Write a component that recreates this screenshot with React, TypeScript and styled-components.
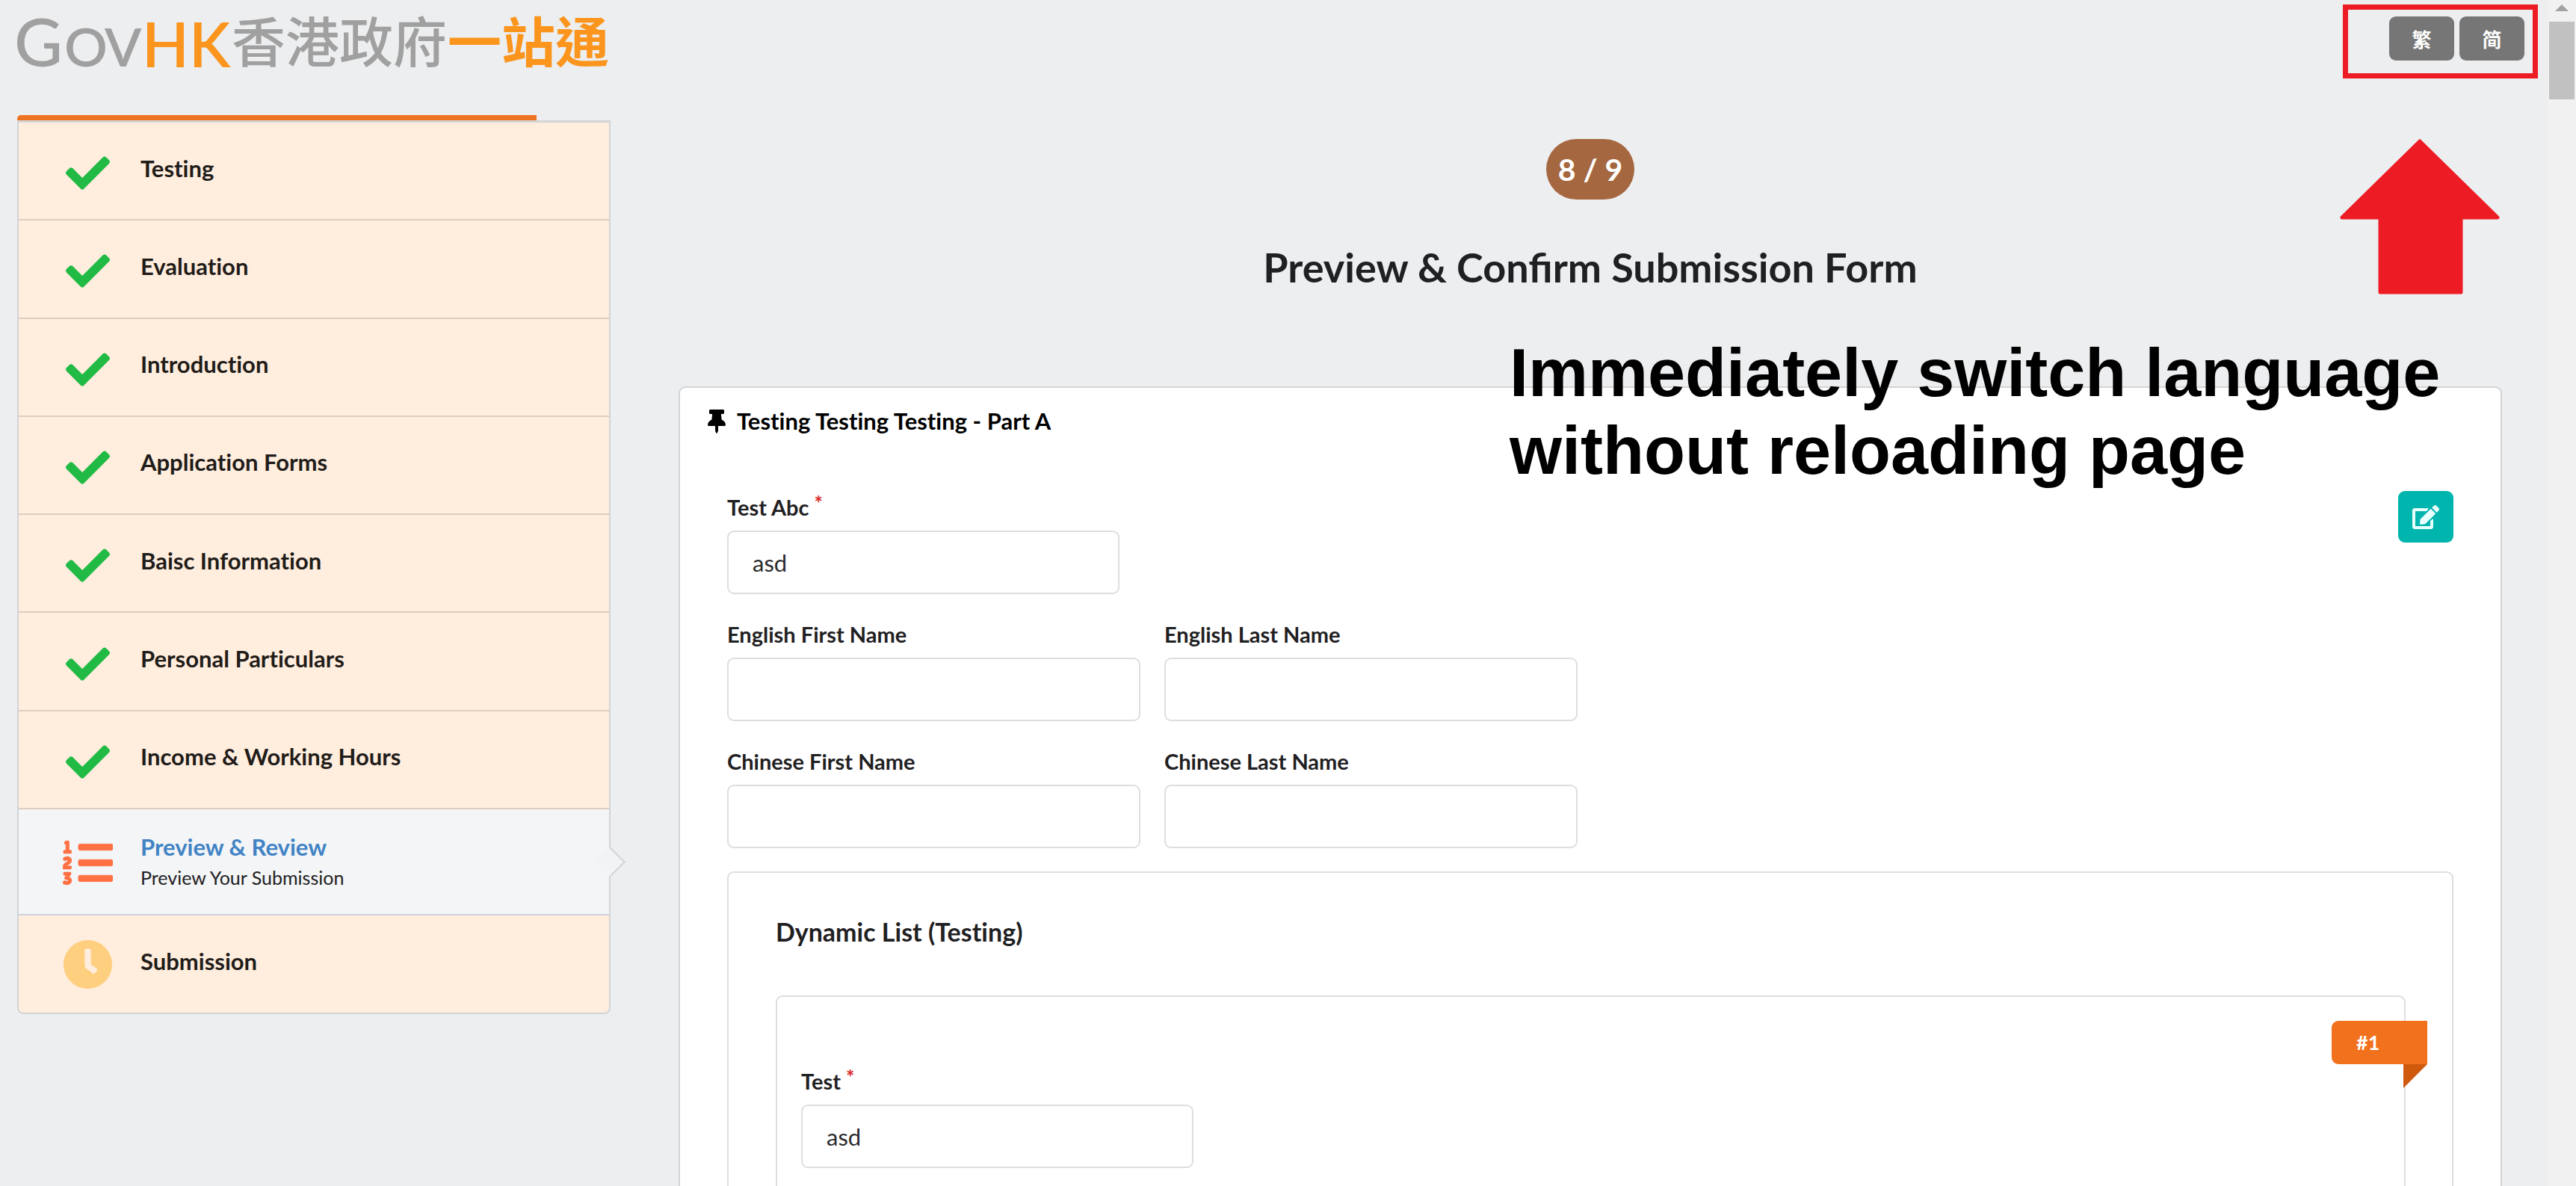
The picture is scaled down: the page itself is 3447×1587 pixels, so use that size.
import React from "react";
import styled, { createGlobalStyle, css } from "styled-components";
import { FaCheck, FaClock, FaEdit, FaListOl, FaThumbtack } from "react-icons/fa";

const lato = `Lato, "Noto Sans CJK TC", sans-serif`;
const cjk = `"Noto Sans CJK TC", sans-serif`;

const GlobalStyle = createGlobalStyle`
  *, *::before, *::after { box-sizing: border-box; }
  body { margin: 0; background: #eceef0; color: #1f2022; font-family: ${lato}; }
  h1, h2, h3, p, ol { margin: 0; padding: 0; }
`;

const Window = styled.div`
  display: flex;
  height: 100vh;
  overflow: hidden;
`;

const Page = styled.div`
  position: relative;
  flex: 1;
  min-width: 0;
`;

const Header = styled.header`
  display: flex;
  justify-content: space-between;
  align-items: flex-start;
  height: 154px;
  padding: 0 31px 0 19px;
`;

const Logo = styled.svg`
  display: block;
  width: 800px;
  height: 120px;
`;

const Languages = styled.nav`
  display: flex;
  gap: 7px;
  padding-top: 22px;
`;

const LanguageButton = styled.button`
  width: 87px;
  height: 59px;
  padding: 0;
  border: 0;
  border-radius: 9px;
  background: #767676;
  color: #fff;
  font: 700 26px/32px ${cjk};
  cursor: pointer;
`;

const Columns = styled.div`
  display: grid;
  grid-template-columns: 794fr 2440fr;
  gap: 91px;
  align-items: start;
  padding: 0 61px 0 23px;
`;

const Progress = styled.div`
  height: 7px;
`;

const ProgressBar = styled.div`
  height: 100%;
  border-top-left-radius: 5px;
  background: #ee7422;
`;

const Steps = styled.ol`
  display: grid;
  grid-template-rows: repeat(7, 1fr) 142px 130px;
  min-height: 1196px;
  border: 2px solid #d2d4d6;
  border-top-width: 3px;
  border-radius: 0 0 8px 8px;
  background: #ffeddd;
  list-style: none;
`;

const Step = styled.li<{ $active?: boolean }>`
  position: relative;
  display: flex;
  align-items: center;
  gap: 37px;
  padding-left: 59px;
  border-bottom: 2px solid #decdc0;

  &:last-child { border-bottom: 0; }

  ${({ $active }) =>
    $active &&
    css`
      background: #f3f5f7;
      border-bottom-color: #d0d2da;

      &::after {
        content: "";
        position: absolute;
        top: 50%;
        right: -16px;
        width: 29px;
        height: 29px;
        margin-top: -14px;
        border: solid #d2d4d6;
        border-width: 2px 2px 0 0;
        background: #f1f3f5;
        transform: rotate(45deg);
      }
    `}
`;

const StepIcon = styled.span<{ $tone: string; $drop?: number }>`
  display: flex;
  justify-content: center;
  width: 67px;
  padding-top: ${({ $drop = 0 }) => $drop}px;
  color: ${({ $tone }) => $tone};
`;

const StepTitle = styled.h3<{ $active?: boolean }>`
  padding-bottom: 8px;
  color: ${({ $active }) => ($active ? "#4183c4" : "#1f1c19")};
  font-size: 31px;
  font-variant-ligatures: none;
  line-height: 36px;
`;

const StepNote = styled.p`
  padding-bottom: 2px;
  font-size: 25px;
  line-height: 30px;
`;

const Main = styled.main`
  display: flex;
  flex-direction: column;
  padding-top: 32px;
`;

const Counter = styled.p`
  align-self: center;
  padding: 16px;
  border-radius: 41px;
  background: #a5673f;
  color: #fff;
  font-size: 41px;
  font-weight: 700;
  line-height: 49px;
`;

const PageTitle = styled.h1`
  padding: 59px 0 127px;
  font-size: 54px;
  line-height: 64px;
  text-align: center;
`;

const Card = styled.section`
  padding: 26px 37px 100px;
  border: 2px solid #d2d4d6;
  border-radius: 9px;
  background: #fff;
`;

const CardTitle = styled.h2`
  display: flex;
  align-items: center;
  gap: 15px;
  color: #000;
  font-size: 31px;
  font-variant-ligatures: none;
  line-height: 37px;
`;

const Form = styled.form`
  padding: 75px 26px 0;
`;

const TopRow = styled.div`
  display: flex;
  justify-content: space-between;
  align-items: flex-end;
`;

const EditButton = styled.button`
  display: flex;
  align-items: center;
  justify-content: center;
  width: 74px;
  height: 69px;
  margin-bottom: 69px;
  padding: 0;
  border: 0;
  border-radius: 9px;
  background: #00b5ad;
  color: #e8fffd;
  cursor: pointer;
`;

const FieldRow = styled.div`
  display: flex;
  gap: 32px;
  padding-top: 36px;
`;

const FieldBox = styled.div<{ $width: number }>`
  display: flex;
  flex-direction: column;
  gap: 14px;
  width: ${({ $width }) => $width}px;
`;

const Label = styled.label`
  font-size: 29px;
  font-weight: 700;
  line-height: 35px;
`;

const Required = styled.sup`
  padding-left: 7px;
  color: #db2828;
  font-size: 27px;
  line-height: 0;
  vertical-align: 7px;
`;

const TextInput = styled.input`
  width: 100%;
  height: 85px;
  padding: 0 32px;
  border: 2px solid #dededf;
  border-radius: 9px;
  background: #fff;
  color: #2b2c2d;
  font: 400 31px/38px ${lato};
`;

const Segment = styled.div`
  margin-top: 31px;
  padding: 58px 62px 80px 63px;
  border: 2px solid #dededf;
  border-radius: 9px;
`;

const SegmentTitle = styled.h3`
  padding-bottom: 65px;
  font-size: 34px;
  font-variant-ligatures: none;
  line-height: 41px;
`;

const ListItem = styled.div`
  position: relative;
  padding: 95px 32px 80px;
  border: 2px solid #dededf;
  border-radius: 9px;
`;

const Ribbon = styled.span`
  position: absolute;
  top: 32px;
  right: -31px;
  width: 128px;
  padding: 13px 33px;
  border-radius: 9px 0 0 9px;
  background: #f2711c;
  color: #fff;
  font-size: 27px;
  font-weight: 700;
  line-height: 32px;
`;

const RibbonFold = styled.i`
  position: absolute;
  top: 100%;
  right: 0;
  width: 32px;
  height: 32px;
  background: #cf590c;
  clip-path: polygon(0 0, 100% 0, 0 100%);
`;

const Highlight = styled.div`
  position: absolute;
  top: 6px;
  right: 13px;
  width: 261px;
  height: 99px;
  border: 7px solid #ed1c24;
  pointer-events: none;
`;

const Arrow = styled.svg`
  position: absolute;
  top: 185px;
  right: 63px;
  width: 216px;
  height: 210px;
`;

const Caption = styled.p`
  position: absolute;
  top: 447px;
  right: 0;
  width: 1394px;
  padding-left: 5px;
  color: #000;
  font: 700 90px/104px "Liberation Sans", Arial, sans-serif;
  pointer-events: none;
`;

const ScrollTrack = styled.div`
  display: flex;
  flex-direction: column;
  align-items: center;
  gap: 14px;
  width: 38px;
  padding-top: 6px;
  background: #f1f1f1;
`;

const ScrollArrow = styled.i`
  width: 18px;
  height: 9px;
  background: #a3a3a3;
  clip-path: polygon(50% 0, 100% 100%, 0 100%);
`;

const ScrollThumb = styled.div`
  width: 34px;
  height: 104px;
  background: #c1c1c1;
`;

const doneSteps = [
  "Testing",
  "Evaluation",
  "Introduction",
  "Application Forms",
  "Baisc Information",
  "Personal Particulars",
  "Income & Working Hours",
];

interface FieldProps {
  id: string;
  label: string;
  value?: string;
  required?: boolean;
  width?: number;
}

function Field({ id, label, value = "", required, width = 553 }: FieldProps) {
  return (
    <FieldBox $width={width}>
      <Label htmlFor={id}>
        {label}
        {required && <Required>*</Required>}
      </Label>
      <TextInput id={id} type="text" defaultValue={value} />
    </FieldBox>
  );
}

function GovLogo() {
  return (
    <Logo viewBox="0 0 800 120" role="img" aria-label="GovHK 香港政府一站通">
      <g fill="#a0a0a0" fontFamily="Lato, sans-serif">
        <text x="0" y="89" fontSize="89" fontWeight="500">G</text>
        <text x="67" y="89" fontSize="72" fontWeight="600">O</text>
        <text x="121" y="89" fontSize="72" fontWeight="600">V</text>
      </g>
      <text x="171" y="90" fill="#fb951e" fontFamily="Lato, sans-serif" fontSize="82" fontWeight="600">
        HK
      </text>
      <g fontFamily='"Noto Sans CJK TC", sans-serif' fontSize="72">
        <text x="291" y="83" fill="#a0a0a0" fontWeight="500">香港政府</text>
        <text x="580" y="83" fill="#fb951e" fontWeight="700">一站通</text>
      </g>
    </Logo>
  );
}

export default function App() {
  return (
    <Window>
      <GlobalStyle />
      <Page>
        <Header>
          <GovLogo />
          <Languages>
            <LanguageButton type="button">繁</LanguageButton>
            <LanguageButton type="button">简</LanguageButton>
          </Languages>
        </Header>

        <Columns>
          <aside>
            <Progress>
              <ProgressBar style={{ width: `${(7 / 8) * 100}%` }} />
            </Progress>
            <Steps>
              {doneSteps.map((title) => (
                <Step key={title}>
                  <StepIcon $tone="#21ba45" $drop={6}>
                    <FaCheck size={59} />
                  </StepIcon>
                  <StepTitle>{title}</StepTitle>
                </Step>
              ))}
              <Step $active>
                <StepIcon $tone="#ff7043" $drop={2}>
                  <FaListOl size={67} strokeWidth={6} />
                </StepIcon>
                <div>
                  <StepTitle $active>Preview &amp; Review</StepTitle>
                  <StepNote>Preview Your Submission</StepNote>
                </div>
              </Step>
              <Step>
                <StepIcon $tone="#ffcf80">
                  <FaClock size={67} />
                </StepIcon>
                <StepTitle>Submission</StepTitle>
              </Step>
            </Steps>
          </aside>

          <Main>
            <Counter>8 / 9</Counter>
            <PageTitle>Preview &amp; Confirm Submission Form</PageTitle>
            <Card>
              <CardTitle>
                <FaThumbtack size={32} style={{ width: 24 }} />
                Testing Testing Testing - Part A
              </CardTitle>
              <Form>
                <TopRow>
                  <Field id="test-abc" label="Test Abc" value="asd" required width={525} />
                  <EditButton type="button" aria-label="Edit">
                    <FaEdit size={36} />
                  </EditButton>
                </TopRow>
                <FieldRow>
                  <Field id="en-first" label="English First Name" />
                  <Field id="en-last" label="English Last Name" />
                </FieldRow>
                <FieldRow>
                  <Field id="zh-first" label="Chinese First Name" />
                  <Field id="zh-last" label="Chinese Last Name" />
                </FieldRow>
                <Segment>
                  <SegmentTitle>Dynamic List (Testing)</SegmentTitle>
                  <ListItem>
                    <Ribbon>
                      #1
                      <RibbonFold />
                    </Ribbon>
                    <Field id="test" label="Test" value="asd" required width={525} />
                  </ListItem>
                </Segment>
              </Form>
            </Card>
          </Main>
        </Columns>

        <Highlight />
        <Arrow viewBox="0 0 216 210" aria-hidden="true">
          <path
            d="M108 4 212 106H163V206H55V106H4Z"
            fill="#ed1c24"
            stroke="#ed1c24"
            strokeWidth="5"
            strokeLinejoin="round"
          />
        </Arrow>
        <Caption>
          Immediately switch language
          <br />
          without reloading page
        </Caption>
      </Page>
      <ScrollTrack>
        <ScrollArrow />
        <ScrollThumb />
      </ScrollTrack>
    </Window>
  );
}
